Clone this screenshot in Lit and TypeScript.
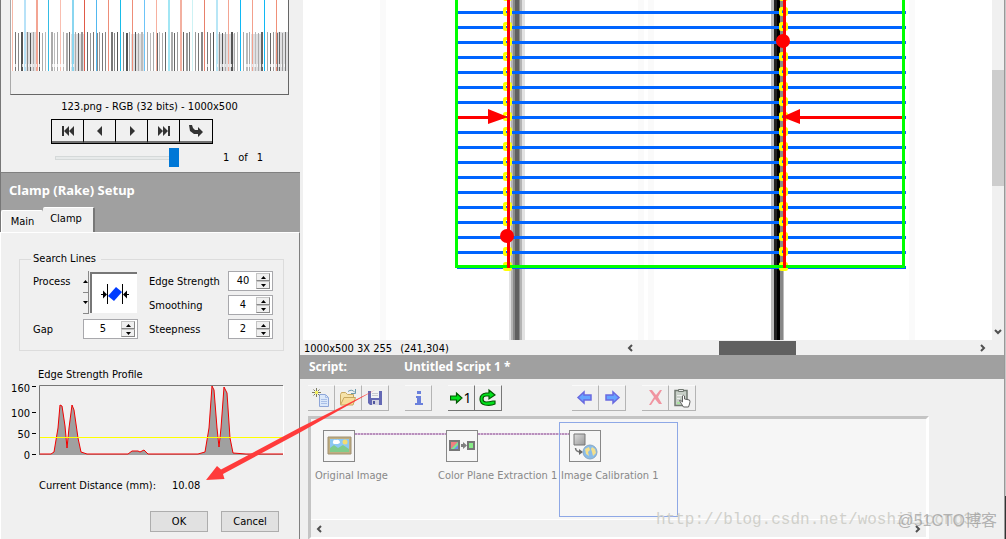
import { LitElement, html, svg, css } from "lit";
import { customElement, property } from "lit/decorators.js";

const range = (n: number) => Array.from({ length: n }, (_, i) => i);

const baseText = css`
  :host {
    display: block;
    font: 11px/16px Tahoma, "DejaVu Sans Condensed", "Noto Sans", sans-serif;
    color: #000;
  }
  * {
    box-sizing: border-box;
  }
  svg {
    display: block;
    flex: none;
  }
  button {
    font: inherit;
    color: inherit;
    padding: 0;
    margin: 0;
    border-radius: 0;
  }
`;

@customElement("spin-box")
class SpinBox extends LitElement {
  @property() label = "";
  @property() value = "";
  @property({ type: Boolean, reflect: true }) wide = false;

  static styles = [
    baseText,
    css`
      .box {
        display: flex;
        width: 45px;
        height: 20px;
        border: 1px solid #a8a8ac;
        background: #fff;
        padding: 1px;
      }
      :host([wide]) .box {
        width: 55px;
      }
      input {
        flex: 1;
        min-width: 0;
        border: 0;
        padding: 0;
        font: inherit;
        text-align: center;
        background: none;
        outline: none;
      }
      .steps {
        display: flex;
        flex-direction: column;
        width: 15px;
        padding-right: 1px;
      }
      .steps button {
        flex: 1;
        display: grid;
        place-items: center;
        background: #f0f0f0;
        border: 1px solid #c4c4c4;
        border-right-color: #888;
        border-bottom-color: #888;
      }
    `,
  ];

  render() {
    return html`<div class="box">
      <input type="text" aria-label=${this.label} .value=${this.value} />
      <div class="steps">
        <button aria-label="Increase">
          <svg width="5" height="3"><path d="M0 3 2.500 0 5 3z" /></svg>
        </button>
        <button aria-label="Decrease">
          <svg width="5" height="3"><path d="M0 0 2.500 3 5 0z" /></svg>
        </button>
      </div>
    </div>`;
  }
}

@customElement("image-browser")
class ImageBrowser extends LitElement {
  static styles = [
    baseText,
    css`
      .panel {
        display: flex;
        flex-direction: column;
        align-items: center;
        height: 172px;
        padding-right: 2px;
        background: #f0f0f0;
        border-left: 1px solid #777;
      }
      .thumb {
        width: 279px;
        height: 95px;
        border: 1px solid #666;
        border-top: 0;
        border-left-color: #aaa;
      }
      .name {
        margin-top: 4px;
      }
      .nav {
        display: flex;
        margin-top: 4px;
        border: 1px solid #000;
        align-self: flex-start;
        margin-left: 50px;
      }
      .nav button {
        width: 32px;
        height: 23px;
        display: grid;
        place-items: center;
        background: #f0f0f0;
        border: 0;
        border-bottom: 2px solid #707070;
        border-right: 1px solid #000;
      }
      .nav button:last-child {
        border-right: 0;
      }
      .seek {
        display: flex;
        align-items: center;
        align-self: stretch;
        padding: 4px 0 0 54px;
      }
      .seek input {
        appearance: none;
        width: 124px;
        height: 19px;
        margin: 0;
        background:
          linear-gradient(#e7eaea, #e7eaea) 1px 9px / 122px 2px no-repeat,
          linear-gradient(#d5d9d9, #d5d9d9) 0 8px / 124px 4px no-repeat;
      }
      .seek input::-webkit-slider-thumb {
        appearance: none;
        width: 10px;
        height: 19px;
        background: #0078d7;
      }
      .count {
        margin-left: 44px;
        display: flex;
        gap: 9px;
      }
    `,
  ];

  private thumbnail() {
    const warm = ["#f7b9a8", "#f3a593", "#f9beb0", "#e05a48", "#ee8d78", "#ee8d78", "#f7b09e", "#f3b0a0", "#e8806a", "#f3a593", "#f3a08c", "#f09078"];
    const cool = ["#b8e2f8", "#34bce4", "#8ad6f0", "#52b8f0", "#18bce8", "#6cc4f8", "#a2e6f4", "#cdf2f4", "#b8e6f6", "#10b8f4", "#10b8f4"];
    const shades = ["#777", "#aaa", "#555", "#999", "#bbb", "#888", "#666", "#aaa"];
    const coolWide = [0, 2, 6, 8];
    return svg`<g shape-rendering="crispEdges">
      <rect width="277" height="71" fill="#fff"/>
      <path d="M15 32h10v39H15zM60 34h14v37H60zM120 34h14v37H120zM205 34h18v37H205zM240 34h12v37H240zM264 32h13v39H264z" fill="#e0e0e2"/>
      ${range(91).map((i) => svg`<rect x=${4 + i * 3} y=${32 + (i % 2)} width=${i % 5 === 2 ? 2 : 1} height=${39 - (i % 2)} fill=${shades[(i * 5 + (i >> 2)) % 8]}/>`)}
      ${warm.map((c, i) => svg`<rect x=${1 + i * 24} width=${i === 1 || i === 7 ? 2 : 1} height="71" fill=${c}/>`)}
      ${cool.map((c, i) => svg`<rect x=${13 + i * 24} width=${coolWide.includes(i) ? 2 : 1} height="71" fill=${c}/>`)}
      <path d="M3 65.500h60M195 65.500h80" stroke="#fff" stroke-width="3" stroke-dasharray="2 1 1 2 1 1" opacity=".7"/>
    </g>`;
  }

  render() {
    return html`<div class="panel">
      <svg class="thumb">${this.thumbnail()}</svg>
      <div class="name">123.png - RGB (32 bits) - 1000x500</div>
      <div class="nav">
        <button aria-label="First image">
          <svg width="14" height="12" fill="#333"><path d="M1 1h2v10H1zM8 1v10L3 6zM13 1v10L8 6z" /></svg>
        </button>
        <button aria-label="Previous image">
          <svg width="12" height="12" fill="#333"><path d="M8 1v10L3 6z" /></svg>
        </button>
        <button aria-label="Next image">
          <svg width="12" height="12" fill="#333"><path d="M4 1v10l5-5z" /></svg>
        </button>
        <button aria-label="Last image">
          <svg width="14" height="12" fill="#333"><path d="M11 1h2v10h-2zM1 1v10l5-5zM6 1v10l5-5z" /></svg>
        </button>
        <button aria-label="Go to image">
          <svg width="16" height="12" fill="#333"><path d="M1 0h3l1 3 2 2h3V2l5 5-5 5V9H6L2 6z" /></svg>
        </button>
      </div>
      <div class="seek">
        <input type="range" min="0" max="1" value="1" aria-label="Image position" />
        <div class="count"><span>1</span><span>of</span><span>1</span></div>
      </div>
    </div>`;
  }
}

@customElement("clamp-setup")
class ClampSetup extends LitElement {
  static styles = [
    baseText,
    css`
      :host {
        display: flex;
        flex-direction: column;
        background: #f0f0f0;
      }
      header {
        height: 60px;
        display: flex;
        flex-direction: column;
        justify-content: space-between;
        background: #a0a0a0;
        border-top: 1px solid #808080;
        border-left: 1px solid #777;
      }
      h2 {
        margin: 0;
        padding: 7px 8px 0;
        font: bold 13px/20px Tahoma, "Noto Sans", sans-serif;
        color: #fff;
      }
      .tabs {
        display: flex;
        align-items: flex-end;
      }
      .tabs button {
        height: 22px;
        width: 42px;
        background: #f0f0f0;
        border: 0;
        border-top: 1px solid #fff;
        border-left: 1px solid #fff;
        border-radius: 2px 2px 0 0;
      }
      .tabs .active {
        height: 25px;
        width: 52px;
        padding: 0 4px 2px 0;
        border-left: 0;
        border-right: 2px solid #777;
      }
      .body {
        flex: 1;
        border-left: 1px solid #fff;
        border-right: 1px solid #808080;
        border-top: 1px solid #fff;
        padding: 18px 15px 0 18px;
      }
      fieldset {
        margin: 0;
        min-width: 0;
        height: 100px;
        border: 1px solid #dcdcdc;
        padding: 4px 10px 0 13px;
        display: flex;
        justify-content: space-between;
      }
      legend {
        padding: 0 5px 0 2px;
        margin-left: -2px;
      }
      .left,
      .right {
        display: grid;
        align-content: start;
      }
      .left {
        grid-template-columns: 50px 55px;
        row-gap: 5px;
      }
      .right {
        grid-template-columns: 79px 45px;
        row-gap: 4px;
      }
      .left label,
      .right label {
        padding-top: 3px;
      }
      .process {
        display: flex;
        height: 43px;
      }
      .arrows {
        width: 6px;
        display: flex;
        flex-direction: column;
      }
      .arrows button {
        flex: 1;
        display: grid;
        place-items: center;
        background: #f0f0f0;
        border: 0;
        border-right: 1px solid #888;
        border-bottom: 1px solid #888;
      }
      .picture {
        flex: 1;
        background: #fff;
        border-top: 2px solid #777;
        border-left: 2px solid #777;
        margin: 1px 1px 1px 1px;
      }
      .profile {
        margin: 17px 0 0 -10px;
      }
      .result {
        display: flex;
        gap: 16px;
        padding: 17px 0 0 20px;
      }
      .actions {
        display: flex;
        justify-content: flex-end;
        gap: 13px;
        padding: 17px 5px 0 0;
      }
      .actions button {
        width: 58px;
        height: 21px;
        border: 1px solid #adadad;
        background: #e1e1e1;
      }
      text {
        font: 11px "DejaVu Sans Condensed", "Noto Sans", sans-serif;
      }
    `,
  ];

  private profile() {
    const curve =
      "M28 86H39L42 84 46 60 48 37 50 38 53 58 55 80 57 60 60 37 62 42 66 70 69 84 75 86H116L120 83 126 83 128 84 132 82 136 86H186L193 84 197 60 200 18 202 22 205 60 207 79 209 60 212 19 215 25 218 70 221 85 234 86H271";
    return html`<svg class="profile" width="282" height="93" viewBox="-10 0 282 93" role="img" aria-label="Edge strength profile">
      <text x="19" y="10">Edge Strength Profile</text>
      <g text-anchor="end">
        <text x="11" y="24">160</text>
        <text x="11" y="49">100</text>
        <text x="11" y="70">50</text>
        <text x="11" y="91">0</text>
      </g>
      <path d="M13 18.500h4M13 44.500h4M13 65.500h4M13 86.500h4" stroke="#000" />
      <path d="M20.500 87V17.500H264" fill="none" stroke="#777" />
      <path d="M264.500 18V87" stroke="#fff" />
      <g transform="translate(-7)">
        <path d="${curve}V87H28z" fill="#a0a0a0" />
        <path d=${curve} fill="none" stroke="#f00000" stroke-linejoin="round" />
      </g>
      <path d="M21 69.500H264" stroke="#ff0" />
    </svg>`;
  }

  render() {
    return html`
      <header>
        <h2>Clamp (Rake) Setup</h2>
        <div class="tabs" role="tablist">
          <button role="tab">Main</button>
          <button role="tab" class="active" aria-selected="true">Clamp</button>
        </div>
      </header>
      <div class="body">
        <fieldset>
          <legend>Search Lines</legend>
          <div class="left">
            <label>Process</label>
            <div class="process">
              <div class="arrows">
                <button aria-label="Previous process"><svg width="5" height="3"><path d="M0 3 2.500 0 5 3z" /></svg></button>
                <button aria-label="Next process"><svg width="5" height="3"><path d="M0 0 2.500 3 5 0z" /></svg></button>
              </div>
              <div class="picture">
                <svg width="45" height="38">
                  <path d="M15.500 10v20M30.500 10v20M9 20.500h5M32 20.500h5" stroke="#000" />
                  <path d="M11 16.500 15 20.500 11 24.500zM35 16.500 31 20.500 35 24.500z" />
                  <path d="M16 22 24 13 30 18 22 27z" fill="#003cff" />
                </svg>
              </div>
            </div>
            <label>Gap</label>
            <spin-box wide label="Gap" value="5"></spin-box>
          </div>
          <div class="right">
            <label>Edge Strength</label><spin-box label="Edge Strength" value="40"></spin-box>
            <label>Smoothing</label><spin-box label="Smoothing" value="4"></spin-box>
            <label>Steepness</label><spin-box label="Steepness" value="2"></spin-box>
          </div>
        </fieldset>
        ${this.profile()}
        <div class="result"><span>Current Distance (mm):</span><output>10.08</output></div>
        <div class="actions"><button>OK</button><button>Cancel</button></div>
      </div>
    `;
  }
}

@customElement("image-view")
class ImageView extends LitElement {
  static styles = [
    baseText,
    css`
      :host {
        display: flex;
        flex-direction: column;
        background: #f0f0f0;
      }
      .main {
        flex: 1;
        min-height: 200px;
        display: flex;
      }
      .canvas {
        flex: 1;
        min-width: 0;
        min-height: 0;
        overflow: hidden;
        background: #fff;
        margin-left: 3px;
        contain: size;
      }
      .vbar {
        width: 12px;
        display: flex;
        flex-direction: column;
        justify-content: space-between;
        align-items: center;
        padding: 70px 0 5px;
      }
      .vthumb {
        width: 12px;
        height: 116px;
        background: #cdcdcd;
      }
      .status {
        display: flex;
        height: 15px;
        padding-left: 4px;
      }
      .info {
        display: flex;
        gap: 8px;
        width: 318px;
        line-height: 17px;
      }
      .hbar {
        flex: 1;
        display: flex;
        align-items: center;
        justify-content: space-between;
        padding: 0 18px 0 5px;
      }
      .hthumb {
        width: 77px;
        height: 14px;
        background: #606060;
        margin-right: 98px;
      }
    `,
  ];

  private scene() {
    const rows = range(17).map((i) => 12.5 + i * 15);
    const edge = (x: number) =>
      [-2.5, ...rows, 267.5].map(
        (y) => svg`<rect x=${x} y=${y - 4} width="6" height="6" rx="1" fill="none" stroke="#ff0" stroke-width="3"/>`
      );
    return svg`<g transform="translate(-303)">
      <g shape-rendering="crispEdges">
        <path d="M383 0v340M641 0v340M651 0v340M912 0v340" stroke="#fafafa" stroke-width="6"/>
        <rect x="509" width="16" height="340" fill="#e2e2e2"/>
        <rect x="511" width="11" height="340" fill="#b4b4b4"/>
        <rect x="513" width="7" height="340" fill="#8a8a8a"/>
        <rect x="515" width="4" height="340" fill="#606060"/>
        <rect x="771" width="13" height="340" fill="#bcbcbc"/>
        <rect x="774" width="9" height="340" fill="#222"/>
        <rect x="777" width="3" height="340" fill="#000"/>
        <rect x="780" y="0" width="3" height="340" fill="#888"/>
        <path d=${rows.map((y) => `M457 ${y}H906`).join("") + "M457 267.500H906"} stroke="#0064ff" stroke-width="3"/>
      </g>
      ${edge(504.5)}${edge(780.5)}
      <path d="M457.500 117.500H500M790 117.500H905" stroke="#f00" stroke-width="3"/>
      <path d="M456.500 0V266.500H903.500V0" fill="none" stroke="#0f0" stroke-width="3"/>
      <path d="M508.500 0V268M784.500 0V268" stroke="#f00" stroke-width="3"/>
      <path d="M488 109v15l20-7zM800 109v15l-18-7z" fill="#f00"/>
      <circle cx="507" cy="236" r="7" fill="#f00"/>
      <circle cx="783" cy="41" r="7" fill="#f00"/>
    </g>`;
  }

  render() {
    return html`
      <div class="main">
        <div class="canvas"><svg width="100%" height="100%">${this.scene()}</svg></div>
        <div class="vbar">
          <div class="vthumb"></div>
          <svg width="8" height="6"><path d="M1 1l3 3 3-3" fill="none" stroke="#505050" stroke-width="2" /></svg>
        </div>
      </div>
      <div class="status">
        <div class="info"><span>1000x500 3X 255</span><span>(241,304)</span></div>
        <div class="hbar">
          <svg width="6" height="8"><path d="M5 1L2 4l3 3" fill="none" stroke="#505050" stroke-width="2" /></svg>
          <div class="hthumb"></div>
          <svg width="6" height="8"><path d="M1 1l3 3-3 3" fill="none" stroke="#505050" stroke-width="2" /></svg>
        </div>
      </div>
    `;
  }
}

const icons = {
  blank: svg`<path d="M7.500 6.500h6l3 3v9h-9z" fill="#dbe8fa" stroke="#8ea6d8"/><path d="M13.500 6.500v3h3M9 11.500h6M9 13.500h6M9 15.500h6" stroke="#a9bfe8" fill="none"/><path d="M4.500 0v9M0 4.500h9M1.500 1.500l6 6M7.500 1.500l-6 6" stroke="#7c7c60"/><path d="M3 3h3v3H3z" fill="#f4f060"/>`,
  open: svg`<path d="M1.500 16V6.500l1-2h4l2 2h6v3" fill="#f5e2a8" stroke="#c8a860"/><path d="M1.500 17 5 9.500h11.500L14 17z" fill="#f7dc98" stroke="#c8a860"/><path d="M9 3.500q4-3 7 1M16.500 1v4.500H12" fill="none" stroke="#6e9cae"/>`,
  save: svg`<path d="M2 3h14v14H4l-2-2z" fill="#6468b4"/><path d="M5 3h8v7H5z" fill="#f2f2f4"/><path d="M6 5.500h6M6 7.500h6" stroke="#c8c8d0"/><path d="M6 12h7v5H6z" fill="#d4d4e0"/><path d="M7 13h2v3H7z" fill="#50549c"/>`,
  info: svg`<path d="M8 3h4v3H8zM7 8h5v7h2v2H6v-2h2v-5H7z" fill="#6a80dc"/>`,
  once: svg`<path d="M.5 8h6V5l5.500 5-5.500 5v-3h-6z" fill="#00e21c" stroke="#045804" stroke-width="1.200"/>`,
  loop: svg`<path d="M16 13v3q-4 2-10 1-5-1-5-6t6-6h3V2l6 5-6 4V8H7q-3 0-3 3t3 3 7-1z" fill="#00e21c" stroke="#045804" stroke-width="1.200"/>`,
  left: svg`<path d="M2 9.500 8 4v3h7v5H8v3z" fill="#66a4ff" stroke="#6a6ae0" stroke-width="1.500"/>`,
  right: svg`<path d="M16 9.500 10 4v3H3v5h7v3z" fill="#66a4ff" stroke="#6a6ae0" stroke-width="1.500"/>`,
  remove: svg`<path d="M3 2h3l4 5 4-5h2l-4 7 4 7h-3l-4-5-4 6H3l5-8z" fill="#f094a0"/>`,
  pick: svg`<path d="M2 2.500h12v15H2z" fill="#c8d0c8" stroke="#707870" stroke-width="1.500"/><path d="M5.500 1.500h5v2h-5z" fill="#e4e4e4" stroke="#707870"/><path d="M4 7.500h5M4 10.500h3" stroke="#eee"/><path d="M4 14h3v2H4z" fill="#a8e0a0"/><path d="M6.500 12.500q1-1 3 1.500V8q1-1.500 2 0v3l5 1q1 1.500 0 4l-1 3h-5q-2-3-4-6.500z" fill="#fff" stroke="#606060"/>`,
};

@customElement("script-panel")
class ScriptPanel extends LitElement {
  static styles = [
    baseText,
    css`
      :host {
        display: flex;
        flex-direction: column;
        height: 184px;
        background: #f0f0f0;
      }
      header {
        display: flex;
        height: 25px;
        padding-left: 9px;
        background: #a0a0a0;
        color: #fff;
        font: bold 12px/24px Tahoma, "Noto Sans", sans-serif;
      }
      header span:first-child {
        width: 95px;
      }
      .tools {
        display: flex;
        gap: 16px;
        padding: 6px 8px 0;
      }
      .group {
        display: flex;
      }
      .group:nth-child(4) {
        margin-left: 54px;
      }
      .group button {
        width: 27px;
        height: 26px;
        display: flex;
        align-items: center;
        justify-content: center;
        background: #f0f0f0;
        border: 0;
        border-top: 1px solid #fafafa;
        border-right: 1px solid #b4b4b4;
        border-bottom: 1px solid #b4b4b4;
      }
      .group .on {
        border-right-color: #777;
        border-bottom-color: #777;
      }
      .one {
        font: 14px/20px "Noto Sans", sans-serif;
      }
      .sheet {
        flex: 1;
        display: flex;
        flex-direction: column;
        margin: 5px 75px 1px 8px;
        border: 3px solid #c4c4c4;
        border-right-color: #fff;
        border-bottom-color: #fff;
        background: #f6f6f6;
      }
      .nodes {
        flex: 1;
        display: flex;
        gap: 4px;
        padding: 3px 2px 2px;
      }
      .node {
        width: 119px;
        height: 95px;
        border: 1px solid transparent;
        padding-top: 7px;
        color: #888;
        white-space: nowrap;
      }
      .node.selected {
        border-color: #8ea8e6;
      }
      .head {
        display: flex;
        margin-left: 9px;
      }
      .icon {
        flex: none;
        width: 32px;
        height: 32px;
        border: 1px solid #888;
      }
      .wire {
        flex: none;
        width: 91px;
        height: 2px;
        margin-top: 3px;
        background: repeating-linear-gradient(90deg, #b890bc 0 2px, #dcc4de 2px 3px);
      }
      .title {
        padding: 6px 0 0 1px;
      }
      .bar {
        display: flex;
        justify-content: space-between;
        align-items: center;
        height: 18px;
        padding: 0 5px;
        background: #f0f0f0;
        border-top: 1px solid #fff;
      }
    `,
  ];

  private tool(name: string, art: unknown, on = false, one = false) {
    return html`<button aria-label=${name} class=${on ? "on" : ""}>
      <svg width=${one ? 13 : 18} height="20">${art}</svg>${one ? html`<span class="one">1</span>` : ""}
    </button>`;
  }

  private node(title: string, art: unknown, last = false) {
    return html`<div class="node ${last ? "selected" : ""}">
      <div class="head">
        <div class="icon"><svg width="30" height="30">${art}</svg></div>
        ${last ? "" : html`<div class="wire"></div>`}
      </div>
      <div class="title">${title}</div>
    </div>`;
  }

  render() {
    const t = this.tool.bind(this);
    return html`
      <header><span>Script:</span><span>Untitled Script 1 *</span></header>
      <div class="tools">
        <div class="group">${t("New", icons.blank)}${t("Open", icons.open)}${t("Save", icons.save)}</div>
        <div class="group">${t("Information", icons.info)}</div>
        <div class="group">${t("Run once", icons.once, true, true)}${t("Run loop", icons.loop, true)}</div>
        <div class="group">${t("Previous step", icons.left)}${t("Next step", icons.right)}</div>
        <div class="group">${t("Delete", icons.remove)}${t("Edit step", icons.pick)}</div>
      </div>
      <div class="sheet">
        <div class="nodes">
          ${this.node("Original Image", svg`
            <path d="M4 6h23v17H4z" fill="#c0ae80" stroke="#a09070"/>
            <path d="M6 8h19v13H6z" fill="#8cc8f4"/>
            <path d="M6 21v-4l4-3 4 3 5-3 6 4v3z" fill="#80cc8c"/>
            <path d="M9 11q0-3 3-2 3-1 4 2 0 2-4 2t-3-2z" fill="#fff"/>
            <circle cx="21" cy="11" r="2.500" fill="#f4dc70"/>`)}
          ${this.node("Color Plane Extraction 1", svg`
            <path d="M3 10h9v9H3z" fill="#7090ec"/>
            <path d="M3 10h9L3 19z" fill="#f08080"/>
            <path d="M3 19 12 10v3l-6 6z" fill="#80e890"/>
            <path d="M3 10h9v9H3z" fill="none" stroke="#777" stroke-width="2"/>
            <path d="M14 13h2v-2l4 3.500-4 3.500v-2h-2z" fill="#808080"/>
            <path d="M21 11h6v7h-6z" fill="#88ec88" stroke="#777" stroke-width="2"/>`)}
          ${this.node("Image Calibration 1", svg`
            <defs><linearGradient id="tone" x2="1" y2="1"><stop stop-color="#ddd"/><stop offset="1" stop-color="#999"/></linearGradient></defs>
            <path d="M4 3h11v11H4z" fill="url(#tone)" stroke="#777"/>
            <path d="M5.500 17q0 4 6 4" fill="none" stroke="#777" stroke-width="1.500"/>
            <path d="M9 18l4 3-4 3z" fill="#666"/>
            <circle cx="20" cy="21" r="7" fill="#8abce8" stroke="#88a8c4"/>
            <path d="M15 18l4-2 1 3-2 2 1 4-3-2zM22 16l3 2 1 4-3 3-1-4-1-3z" fill="#f4e08c"/>`, true)}
        </div>
        <div class="bar">
          <svg width="6" height="8"><path d="M5 1L2 4l3 3" fill="none" stroke="#505050" stroke-width="2" /></svg>
          <svg width="6" height="8"><path d="M1 1l3 3-3 3" fill="none" stroke="#505050" stroke-width="2" /></svg>
        </div>
      </div>
    `;
  }
}

@customElement("app-root")
class AppRoot extends LitElement {
  static styles = [
    baseText,
    css`
      .window {
        position: relative;
        display: flex;
        min-height: 100vh;
        overflow: hidden;
        background: #f0f0f0;
      }
      .side {
        width: 300px;
        flex: none;
        display: flex;
        flex-direction: column;
      }
      .side clamp-setup {
        flex: 1;
      }
      .work {
        flex: 1;
        min-width: 0;
        display: flex;
        flex-direction: column;
      }
      .work image-view {
        flex: 1;
      }
      .behind {
        width: 2px;
        border-left: 1px solid #999;
        background: linear-gradient(#c8c8c8 496px, #333 496px);
      }
      .pointer {
        position: absolute;
        left: 0;
        top: 0;
        pointer-events: none;
      }
      .mark {
        position: absolute;
        pointer-events: none;
        white-space: nowrap;
      }
      .address {
        left: 656px;
        bottom: 8px;
        font: 16px/22px "Liberation Mono", monospace;
        color: #d0d0cb;
      }
      .credit {
        right: 9px;
        bottom: 6px;
        font: 16px/24px "Liberation Sans", "Noto Sans CJK SC", sans-serif;
        color: rgba(150, 150, 150, 0.7);
      }
    `,
  ];

  render() {
    return html`<div class="window">
      <div class="side">
        <image-browser></image-browser>
        <clamp-setup></clamp-setup>
      </div>
      <div class="work">
        <image-view></image-view>
        <script-panel></script-panel>
      </div>
      <div class="behind"></div>
      <svg class="pointer" width="380" height="490">
        <path d="M206 480 217 466 221 469.500 300 427.500 375 390 300 432.500 223 474 224.500 479z" fill="#ff3b3b" />
      </svg>
      <span class="mark address">http://blog.csdn.net/woshilicong32</span>
      <span class="mark credit">@51CTO博客</span>
    </div>`;
  }
}
